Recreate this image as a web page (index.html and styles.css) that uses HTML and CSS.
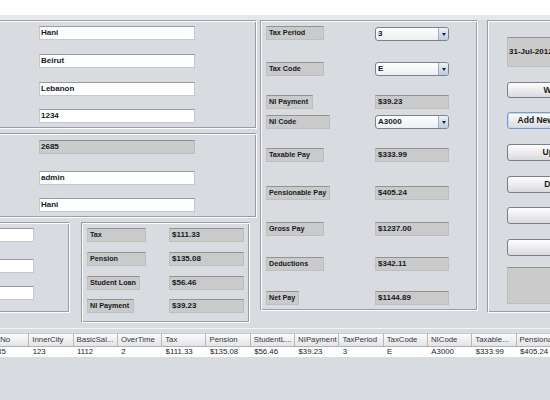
FILE: index.html
```html
<!DOCTYPE html>
<html>
<head>
<meta charset="utf-8">
<link rel="stylesheet" href="styles.css">
</head>
<body>
<div class="topbar"></div>
<div class="band"></div>
<div class="main">
  <div class="col-left">
    <div class="panel p1">
      <div class="field mt5">Hani</div>
      <div class="field mt14">Beirut</div>
      <div class="field mt14">Lebanon</div>
      <div class="field mt13">1234</div>
    </div>
    <div class="panel p2">
      <div class="field dis mt6">2685</div>
      <div class="field mt17">admin</div>
      <div class="field mt13">Hani</div>
    </div>
    <div class="row3">
      <div class="panel p3">
        <div class="sfield mt5"></div>
        <div class="sfield mt17"></div>
        <div class="sfield mt13"></div>
      </div>
      <div class="panel p4">
        <div class="drow mt5"><div class="lbl w59">Tax</div><div class="val">$111.33</div></div>
        <div class="drow mt10"><div class="lbl w59">Pension</div><div class="val">$135.08</div></div>
        <div class="drow mt10"><div class="lbl w53">Student Loan</div><div class="val">$56.46</div></div>
        <div class="drow mt9"><div class="lbl w47">NI Payment</div><div class="val">$39.23</div></div>
      </div>
    </div>
  </div>
  <div class="panel mid">
    <div class="mrow mt5"><div class="lbl w58">Tax Period</div><div class="combo c1">3<span class="arr"><i></i></span></div></div>
    <div class="mrow mt21"><div class="lbl w58">Tax Code</div><div class="combo">E<span class="arr"><i></i></span></div></div>
    <div class="mrow mt19"><div class="lbl w47">NI Payment</div><div class="val">$39.23</div></div>
    <div class="mrow mt6"><div class="lbl w64">NI Code</div><div class="combo">A3000<span class="arr"><i></i></span></div></div>
    <div class="mrow mt19"><div class="lbl w58">Taxable Pay</div><div class="val">$333.99</div></div>
    <div class="mrow mt24"><div class="lbl w64">Pensionable Pay</div><div class="val">$405.24</div></div>
    <div class="mrow mt22"><div class="lbl w58">Gross Pay</div><div class="val">$1237.00</div></div>
    <div class="mrow mt21"><div class="lbl w58">Deductions</div><div class="val">$342.11</div></div>
    <div class="mrow mt20"><div class="lbl w33">Net Pay</div><div class="val">$1144.89</div></div>
  </div>
  <div class="panel right">
    <div class="date mt16">31-Jul-2012</div>
    <div class="btn h16 mt15">Wages</div>
    <div class="btn focus mt14">Add New Employee</div>
    <div class="btn mt15">Update</div>
    <div class="btn mt15">Delete</div>
    <div class="btn mt14"></div>
    <div class="btn mt15"></div>
    <div class="gbox mt11"></div>
  </div>
</div>
<div class="sep"><div class="sep-line"></div></div>
<div class="tbl">
  <div class="th">RefNo</div>
  <div class="th">InnerCity</div>
  <div class="th">BasicSal...</div>
  <div class="th">OverTime</div>
  <div class="th">Tax</div>
  <div class="th">Pension</div>
  <div class="th">StudentL...</div>
  <div class="th">NIPayment</div>
  <div class="th">TaxPeriod</div>
  <div class="th">TaxCode</div>
  <div class="th">NICode</div>
  <div class="th">Taxable...</div>
  <div class="th">Pensiona...</div>
  <div class="td">2685</div>
  <div class="td">123</div>
  <div class="td">1112</div>
  <div class="td">2</div>
  <div class="td">$111.33</div>
  <div class="td">$135.08</div>
  <div class="td">$56.46</div>
  <div class="td">$39.23</div>
  <div class="td">3</div>
  <div class="td">E</div>
  <div class="td">A3000</div>
  <div class="td">$333.99</div>
  <div class="td">$405.24</div>
</div>
</body>
</html>
```
FILE: styles.css
```css
* { box-sizing: border-box; margin: 0; padding: 0; }
html, body { width: 550px; height: 400px; overflow: hidden; }
body {
  background: #d8dbe0;
  font-family: "Liberation Sans", Arial, sans-serif;
  color: #151922;
}
.topbar { height: 15px; background: #ffffff; }
.band { height: 5px; background: #e5e7eb; }
.main { display: flex; align-items: flex-start; height: 305px; }

.panel {
  border: 1px solid;
  border-color: #9a9da3 #fcfcfd #fcfcfd #9a9da3;
  box-shadow: inset 1px 1px 0 #fcfcfd, inset -1px -1px 0 #9a9da3;
  flex: none;
}
.col-left { flex: none; width: 277px; margin-left: -20px; }
.p1 { height: 109px; }
.p2 { height: 85px; margin-top: 4px; }
.row3 { display: flex; align-items: flex-start; margin-top: 4px; }
.p3 { width: 90px; height: 91px; }
.p4 { width: 169px; height: 101px; margin-left: 11px; }
.mid { width: 218px; height: 291px; margin-left: 3px; }
.right { width: 140px; height: 293px; margin-left: 9px; }

.field {
  width: 156px; height: 14px; margin-left: 58px;
  background: #ffffff;
  border: 1px solid #c6c8cc; border-top-color: #9b9da2;
  font-weight: bold; font-size: 8px; line-height: 12px;
  padding-left: 1px; white-space: nowrap;
}
.field.dis { background: #cbcbcb; border-color: #bcbcbc; border-top-color: #8f8f8f; }
.sfield {
  width: 48px; height: 14px; margin-left: 5px;
  background: #ffffff;
  border: 1px solid #c6c8cc; border-top-color: #9b9da2;
}

.drow { display: grid; grid-template-columns: 82px 75px; margin-left: 5px; }
.mrow { display: grid; grid-template-columns: 109px 74px; margin-left: 5px; }

.lbl, .val {
  height: 14px;
  background: #cacaca;
  border: 1px solid #bebebe; border-top-color: #939393;
  font-weight: bold; line-height: 12px;
  padding-left: 2px; white-space: nowrap; overflow: hidden;
}
.lbl { font-size: 7.2px; }
.val { font-size: 8px; }
.w33 { width: 33px; } .w47 { width: 47px; } .w53 { width: 53px; }
.w58 { width: 58px; } .w59 { width: 59px; } .w64 { width: 64px; }

.combo {
  display: flex; height: 14px;
  border: 1px solid #7d8189; border-radius: 3px;
  background: linear-gradient(#ffffff, #eceef0);
  font-weight: bold; font-size: 8px; line-height: 12px; padding-left: 2px;
}
.combo.c1 { margin-top: 1px; }
.arr {
  margin-left: auto; width: 10px; height: 12px;
  border-left: 1px solid #a6adb8; border-radius: 0 2px 2px 0;
  background: linear-gradient(#eef2f8, #bccadb);
  display: flex; align-items: center; justify-content: center;
}
.arr i {
  display: block; width: 0; height: 0;
  border-left: 2.5px solid transparent; border-right: 2.5px solid transparent;
  border-top: 3px solid #1d2029;
}

.date {
  width: 100px; height: 30px; margin-left: 19px;
  background: #cbcbcb; border: 1px solid #bebebe; border-top-color: #939393;
  font-weight: bold; font-size: 8px; line-height: 28px; padding-left: 1px;
  white-space: nowrap;
}
.btn {
  width: 100px; height: 17px; margin-left: 19px;
  border: 1px solid #7b7e84; border-radius: 3px;
  background: linear-gradient(#fefefe, #ececee 50%, #d9dadd);
  font-weight: bold; font-size: 8.5px; line-height: 15px; text-align: center; white-space: nowrap;
}
.btn.h16 { height: 16px; line-height: 14px; }
.btn.focus { border-color: #6d9ed8; box-shadow: inset 0 0 0 1px #c4daf2; }
.gbox {
  width: 100px; height: 37px; margin-left: 19px;
  background: #cbcbcb; border: 1px solid #bebebe; border-top-color: #939393;
}

.mt5 { margin-top: 5px; } .mt6 { margin-top: 6px; } .mt9 { margin-top: 9px; }
.mt10 { margin-top: 10px; } .mt11 { margin-top: 11px; } .mt13 { margin-top: 13px; }
.mt14 { margin-top: 14px; } .mt15 { margin-top: 15px; } .mt16 { margin-top: 16px; }
.mt17 { margin-top: 17px; } .mt19 { margin-top: 19px; } .mt20 { margin-top: 20px; }
.mt21 { margin-top: 21px; } .mt22 { margin-top: 22px; } .mt24 { margin-top: 24px; }

.sep { height: 8px; padding-top: 3px; }
.sep-line { height: 1px; background: #f3f4f6; }

.tbl {
  display: grid; grid-template-columns: repeat(13, 44.3px);
  width: max-content; margin-left: -15px;
  font-size: 7.8px;
}
.th {
  height: 14px;
  background: linear-gradient(#fbfbfc, #e3e4e6);
  border-right: 1px solid #b7b8bc; border-bottom: 1px solid #aeb0b4; border-top: 1px solid #c9cacd;
  line-height: 12px; padding-left: 3px;
  color: #33363c; white-space: nowrap; overflow: hidden;
}
.td {
  height: 10px; background: #ffffff;
  line-height: 10px; padding-left: 3.4px;
  color: #1b1e24; white-space: nowrap; overflow: hidden;
}
```
